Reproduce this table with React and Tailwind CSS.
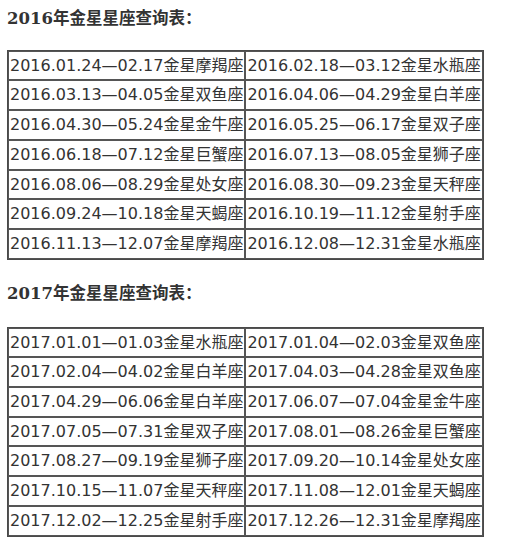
import React from "react";

const t2016 = [
  ["2016.01.24—02.17金星摩羯座", "2016.02.18—03.12金星水瓶座"],
  ["2016.03.13—04.05金星双鱼座", "2016.04.06—04.29金星白羊座"],
  ["2016.04.30—05.24金星金牛座", "2016.05.25—06.17金星双子座"],
  ["2016.06.18—07.12金星巨蟹座", "2016.07.13—08.05金星狮子座"],
  ["2016.08.06—08.29金星处女座", "2016.08.30—09.23金星天秤座"],
  ["2016.09.24—10.18金星天蝎座", "2016.10.19—11.12金星射手座"],
  ["2016.11.13—12.07金星摩羯座", "2016.12.08—12.31金星水瓶座"],
];

const t2017 = [
  ["2017.01.01—01.03金星水瓶座", "2017.01.04—02.03金星双鱼座"],
  ["2017.02.04—04.02金星白羊座", "2017.04.03—04.28金星双鱼座"],
  ["2017.04.29—06.06金星白羊座", "2017.06.07—07.04金星金牛座"],
  ["2017.07.05—07.31金星双子座", "2017.08.01—08.26金星巨蟹座"],
  ["2017.08.27—09.19金星狮子座", "2017.09.20—10.14金星处女座"],
  ["2017.10.15—11.07金星天秤座", "2017.11.08—12.01金星天蝎座"],
  ["2017.12.02—12.25金星射手座", "2017.12.26—12.31金星摩羯座"],
];

function Table({ rows, className }) {
  return (
    <table
      className={`border-separate border-spacing-0 border border-[#4a4a4a] ${className}`}
    >
      <tbody>
        {rows.map((r, i) => (
          <tr key={i}>
            {r.map((c, j) => (
              <td
                key={j}
                className="border border-[#555] p-0 pl-[1px] pr-[1px] w-[235px] h-[27.7px] leading-[27.7px] whitespace-nowrap text-[16px] text-[#333] align-middle"
                style={{ fontFamily: '"DejaVu Sans", "Noto Sans CJK SC", sans-serif' }}
              >
                {c}
              </td>
            ))}
          </tr>
        ))}
      </tbody>
    </table>
  );
}

export default function App() {
  const titleFont = { fontFamily: '"DejaVu Serif", "Noto Sans CJK SC", serif' };
  return (
    <div className="w-[506px] h-[543px] bg-white pl-[7px] pt-[7px] overflow-hidden">
      <p className="h-[24px] leading-[24px] font-bold text-[16.5px] text-[#333]" style={titleFont}>
        2016年金星星座查询表：
      </p>
      <Table rows={t2016} className="mt-[18.7px]" />
      <p className="mt-[22px] h-[24px] leading-[24px] font-bold text-[16.5px] text-[#333]" style={titleFont}>
        2017年金星星座查询表：
      </p>
      <Table rows={t2017} className="mt-[21px]" />
    </div>
  );
}
